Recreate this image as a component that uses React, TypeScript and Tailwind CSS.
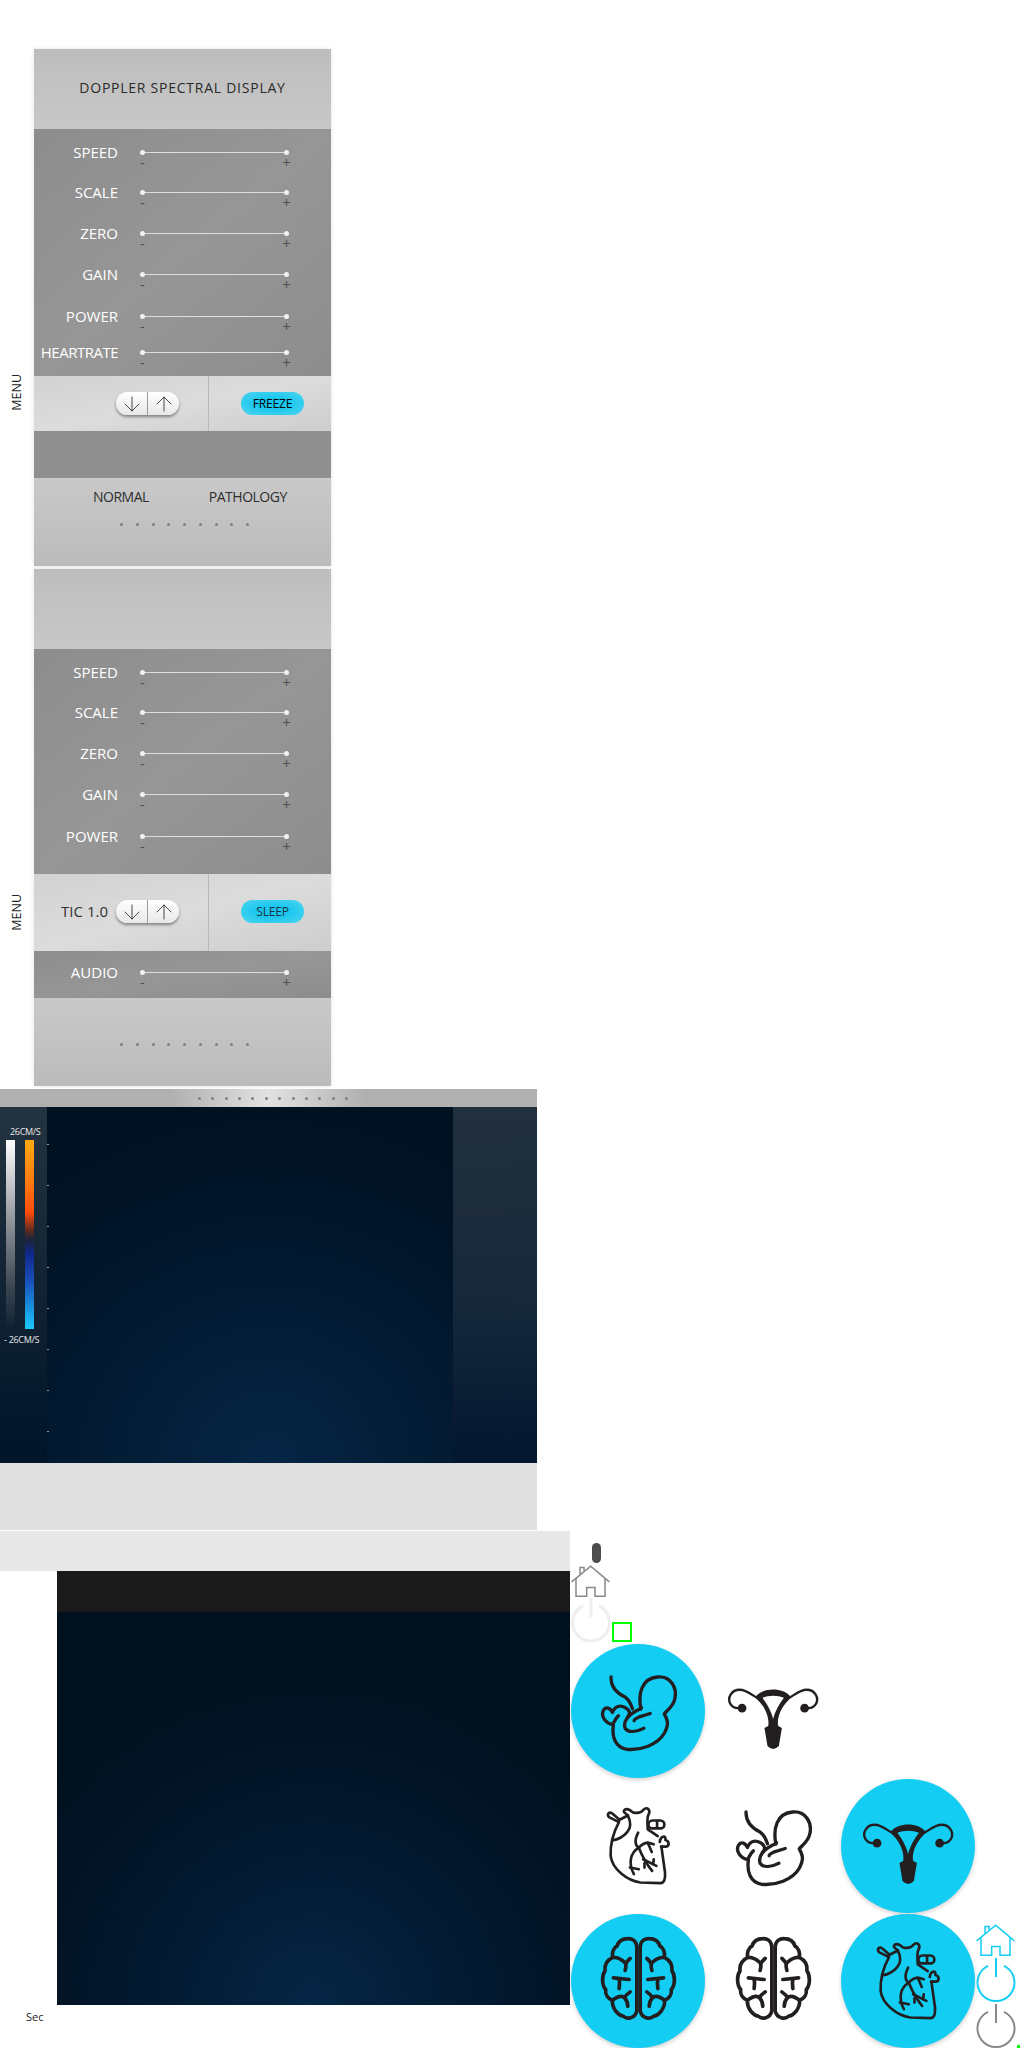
import { ArrowDown, ArrowUp } from "lucide-react";

const CYAN = "#14cdf3";

function Dots({ count, className }: { count: number; className: string }) {
  return (
    <div className={`flex justify-between ${className}`}>
      {Array.from({ length: count }).map((_, i) => (
        <span key={i} className="w-[3px] h-[3px] rounded-full bg-[#7f7f7f]" />
      ))}
    </div>
  );
}

function SliderRow({ label, className, tight }: { label: string; className?: string; tight?: boolean }) {
  return (
    <div className={`flex h-5 ${className ?? ""}`}>
      <div className={`w-[84px] text-right text-[15px] font-medium text-white leading-5 whitespace-nowrap ${tight ? "tracking-[-0.5px]" : ""}`}>
        {label}
      </div>
      <div className="ml-[22px] w-[149px] pt-2">
        <div className="relative flex h-[5px] items-center justify-between">
          <span className="w-[5px] h-[5px] rounded-full bg-[#f2f2f2]" />
          <span className="flex-1 h-px bg-[#dedede]" />
          <span className="w-[5px] h-[5px] rounded-full bg-[#f2f2f2]" />
        </div>
        <div className="flex justify-between text-[15px] leading-[14px] text-[#505050]">
          <span className="w-[5px] text-center">-</span>
          <span className="w-[5px] flex justify-center">+</span>
        </div>
      </div>
    </div>
  );
}

function Stepper() {
  return (
    <div className="flex h-[23px] w-[63px] rounded-full bg-gradient-to-b from-white to-[#e8e8e8] shadow-[0_2px_3px_rgba(0,0,0,0.4)]">
      <div className="flex flex-1 items-center justify-center border-r border-[#9a9a9a]">
        <ArrowDown size={24} strokeWidth={0.9} className="text-[#333]" />
      </div>
      <div className="flex flex-1 items-center justify-center">
        <ArrowUp size={24} strokeWidth={0.9} className="text-[#333]" />
      </div>
    </div>
  );
}

function CyanPill({ label, className }: { label: string; className: string }) {
  return (
    <div className={`flex h-[23px] w-[63px] items-center justify-center rounded-full bg-[radial-gradient(ellipse_at_center,#1cc6ee_35%,#4ed6f0_100%)] text-[12px] tracking-[-0.2px] ${className}`}>
      {label}
    </div>
  );
}

function ControlRow({ tic, action, textClass, height, inner }: { tic?: boolean; action: string; textClass: string; height: string; inner?: string }) {
  return (
    <div className={`flex bg-gradient-to-br from-[#d2d2d2] via-[#dcdcdc] to-[#cdcdcd] ${height}`}>
      <div className={`flex w-[175px] items-center justify-end gap-2 border-r border-[#b8b8b8] pr-[29px] ${inner ?? ""}`}>
        {tic && <span className="text-[15px] text-[#333]">TIC 1.0</span>}
        <Stepper />
      </div>
      <div className={`flex flex-1 items-center pl-8 ${inner ?? ""}`}>
        <CyanPill label={action} className={textClass} />
      </div>
    </div>
  );
}

const rowSpacing = ["mt-[13px]", "mt-5", "mt-[21px]", "mt-[21px]", "mt-[22px]", "mt-4"];

function Panel({ children }: { children: React.ReactNode }) {
  return (
    <div className="flex h-[517px]">
      <div className="flex w-[34px] justify-center">
        <span className="mt-[325px] h-fit rotate-180 text-[12.5px] leading-none text-[#222] [writing-mode:vertical-rl]">MENU</span>
      </div>
      <div className="flex w-[297px] flex-col shadow-[0_0_4px_rgba(0,0,0,0.12)]">{children}</div>
    </div>
  );
}

function Fetus() {
  return (
    <svg viewBox="90 100 230 230" className="h-[77px] w-[77px] overflow-visible" fill="none" stroke="#231f20" strokeWidth="10" strokeLinecap="round" strokeLinejoin="round">
      <path d="M123 112C122 140 140 160 165 172C180 182 183 195 187 207" />
      <path d="M212 208C203 160 215 116 262 112C302 108 320 145 314 175C310 200 292 210 282 222C292 240 297 252 282 280C262 315 210 332 170 328C135 322 125 290 130 255C105 250 92 228 100 212C108 198 122 205 127 218C135 198 150 195 165 203C175 208 185 220 172 232" />
      <path d="M130 250C135 240 140 232 145 228" />
      <path d="M240 221L205 232C195 236 192 240 192 243" />
      <path d="M221 265C200 275 175 280 165 265C158 245 175 225 200 212C208 208 212 208 214 204" />
    </svg>
  );
}

function Uterus() {
  return (
    <svg viewBox="475 79 272 272" className="h-[91px] w-[91px] overflow-visible">
      <g fill="none" stroke="#231f20" strokeWidth="7" strokeLinecap="round">
        <path d="M568 178C545 165 530 150 510 150C485 150 472 175 482 192C487 202 495 205 505 205" />
        <path d="M652 178C675 165 690 150 710 150C735 150 748 175 738 192C733 202 725 205 715 205" />
      </g>
      <circle cx="517" cy="205" r="13" fill="#231f20" />
      <circle cx="704" cy="205" r="13" fill="#231f20" />
      <path
        fillRule="evenodd"
        fill="#231f20"
        d="M558 170C580 142 640 142 662 170L655 182C635 200 620 235 625 258L636 264L627 318Q610 336 593 318L584 264L595 258C600 235 585 200 565 182ZM578 174C595 166 625 166 642 174C630 190 615 215 610 238C605 215 590 190 578 174Z"
      />
    </svg>
  );
}

function Heart() {
  return (
    <svg viewBox="100 500 205 240" className="h-[80px] w-[68px] overflow-visible" fill="none" stroke="#231f20" strokeWidth="8" strokeLinecap="round" strokeLinejoin="round">
      <path d="M145 548C128 580 118 610 120 650C125 690 170 725 210 730L270 732C282 732 285 720 284 700L273 622" />
      <path d="M145 548L115 533C108 525 115 515 125 522L147 541L172 528C165 520 155 518 162 511C170 505 180 512 186 518C198 522 212 520 220 510C230 500 242 512 234 526C229 534 230 545 232 570L262 590" />
      <path d="M172 528C180 545 182 565 170 578C160 590 145 600 125 603" />
      <rect x="234" y="543" width="48" height="24" rx="12" />
      <path d="M260 545V565" />
      <path d="M268 608C270 590 288 585 285 602C298 605 298 622 285 622L272 622" />
      <path d="M203 580C190 605 195 620 205 625C225 605 235 610 250 615" />
      <path d="M205 625C180 640 172 670 190 705" />
      <path d="M205 625C215 650 225 670 245 695" />
      <path d="M232 610L244 638" />
      <path d="M218 660L258 680" />
      <path d="M222 672L222 685" />
      <path d="M178 685L205 690" />
      <path d="M250 660L248 675" />
    </svg>
  );
}

function Brain() {
  const half = (
    <>
      <path d="M605 200C603 182 590 175 578 176C562 176 550 185 546 198C535 203 530 218 533 232C517 240 508 255 510 272C500 285 500 315 512 328C510 342 518 355 532 360C530 385 550 405 565 408C575 418 600 415 605 392Z" />
      <path d="M536 232C550 232 562 240 572 250C575 245 580 240 585 235" />
      <path d="M572 250C573 258 572 265 570 271" />
      <path d="M535 293L582 298" />
      <path d="M552 296C555 310 553 318 552 325" />
      <path d="M532 360C545 350 560 345 568 352C575 360 578 370 578 378" />
      <path d="M568 352C572 345 578 340 585 335" />
    </>
  );
  return (
    <svg viewBox="495 174 230 260" className="h-[87px] w-[77px] overflow-visible" fill="none" stroke="#231f20" strokeWidth="11" strokeLinecap="round" strokeLinejoin="round">
      <g>{half}</g>
      <g transform="translate(1220 0) scale(-1 1)">{half}</g>
    </svg>
  );
}

function House({ color }: { color: string }) {
  return (
    <svg viewBox="33 105 117 95" className="h-8 w-[39px] overflow-visible" fill="none" stroke={color} strokeWidth="4.5">
      <path d="M35 155L92 108L148 155" />
      <path d="M60 134V112H72V122" />
      <path d="M48 145V198H80V172H105V198H135V145" />
    </svg>
  );
}

function Power({ color, width = 2 }: { color: string; width?: number }) {
  return (
    <svg viewBox="0 0 40 44" className="h-11 w-10 overflow-visible" fill="none" stroke={color} strokeWidth={width}>
      <path d="M12 7.8A18.5 18.5 0 1 0 28 7.8" />
      <path d="M20 0V19" />
    </svg>
  );
}

function Cell({ active, children }: { active?: boolean; children?: React.ReactNode }) {
  return (
    <div className={`flex h-[134px] w-[134px] items-center justify-center rounded-full ${active ? "bg-[#14cdf3] shadow-[0_2px_4px_rgba(0,0,0,0.18)]" : ""}`}>
      {children}
    </div>
  );
}

export default function App() {
  return (
    <div className="relative h-[2048px] w-[1024px] overflow-hidden bg-white font-['Open_Sans',sans-serif]">
      <div className="flex flex-col gap-[3px] pt-[49px]">
        <Panel>
          <div className="flex h-20 items-center justify-center bg-gradient-to-b from-[#bdbdbd] to-[#c8c8c8] pb-[3px] text-[14px] tracking-[0.75px] text-[#2a2a2a]">
            DOPPLER SPECTRAL DISPLAY
          </div>
          <div className="h-[247px] bg-gradient-to-br from-[#8d8d8d] via-[#969696] to-[#8d8d8d]">
            {["SPEED", "SCALE", "ZERO", "GAIN", "POWER", "HEARTRATE"].map((label, i) => (
              <SliderRow key={label} label={label} className={rowSpacing[i]} tight={label === "HEARTRATE"} />
            ))}
          </div>
          <ControlRow action="FREEZE" textClass="text-black" height="h-[55px]" />
          <div className="h-[47px] bg-[#8f8f8f]" />
          <div className="flex h-[88px] flex-col bg-gradient-to-b from-[#c9c9c9] to-[#bbbbbb]">
            <div className="flex h-[37px] items-center text-[14px] tracking-[-0.5px] text-[#2e2e2e]">
              <span className="ml-[59px]">NORMAL</span>
              <span className="ml-[60px]">PATHOLOGY</span>
            </div>
            <Dots count={9} className="ml-[86px] mt-2 w-[129px]" />
          </div>
        </Panel>
        <Panel>
          <div className="h-20 bg-gradient-to-b from-[#bdbdbd] to-[#c8c8c8]" />
          <div className="h-[225px] bg-gradient-to-br from-[#8d8d8d] via-[#969696] to-[#8d8d8d]">
            {["SPEED", "SCALE", "ZERO", "GAIN", "POWER"].map((label, i) => (
              <SliderRow key={label} label={label} className={rowSpacing[i]} />
            ))}
          </div>
          <ControlRow tic action="SLEEP" textClass="text-[#1c3441]" height="h-[77px]" inner="pb-0.5" />
          <div className="h-[47px] bg-gradient-to-br from-[#8d8d8d] via-[#969696] to-[#8d8d8d] pt-[11px]">
            <SliderRow label="AUDIO" />
          </div>
          <div className="h-[88px] bg-gradient-to-b from-[#c9c9c9] to-[#bbbbbb] pt-[45px]">
            <Dots count={9} className="ml-[86px] w-[129px]" />
          </div>
        </Panel>
      </div>

      <div className="mt-[3px] w-[537px]">
        <div className="flex h-[18px] items-center bg-[linear-gradient(90deg,#b0b0b0_32%,#e2e2e2_50%,#b0b0b0_68%)] pl-[198px]">
          <Dots count={12} className="w-[150px]" />
        </div>
        <div className="flex h-[356px] bg-[radial-gradient(ellipse_70%_100%_at_50%_100%,#052545_0%,#011325_85%,#001122_100%)]">
          <div className="w-[47px] bg-gradient-to-b from-[#243340] to-[#021428] pt-[19px] text-[9px] leading-3 text-[#e8e8e8]">
            <div className="pl-[10px] tracking-[-0.3px]">26CM/S</div>
            <div className="ml-[6px] mt-[2px] flex h-[189px] gap-[10px]">
              <div className="w-[9px] bg-[linear-gradient(180deg,#ffffff_0%,#8a8f95_45%,#3a4550_78%,transparent_100%)]" />
              <div className="w-[9px] bg-[linear-gradient(180deg,#fdaa12_0%,#ff7a10_22%,#ff4d0c_38%,#5a2a20_48%,#1a2440_53%,#10288a_60%,#1a50bc_75%,#1ac8fc_100%)]" />
            </div>
            <div className="mt-[5px] pl-[4px] tracking-[-0.3px]">- 26CM/S</div>
          </div>
          <div className="flex w-[2px] flex-col gap-10 pt-[37px]">
            {Array.from({ length: 8 }).map((_, i) => (
              <span key={i} className="h-px w-[2px] bg-[#8c98a2]" />
            ))}
          </div>
          <div className="flex-1" />
          <div className="w-[84px] bg-[linear-gradient(180deg,#22303d_0%,#16283a_55%,#031630_100%)]" />
        </div>
        <div className="h-[67px] bg-[#e0e0e0]" />
      </div>

      <div className="mt-px flex h-[517px]">
        <div className="flex w-[570px] flex-col">
          <div className="h-10 bg-[#e7e7e7]" />
          <div className="ml-[57px] flex flex-col">
            <div className="h-[41px] bg-[#1a1a1a]" />
            <div className="h-[393px] bg-[radial-gradient(ellipse_70%_90%_at_50%_100%,#052545_0%,#021426_70%,#01101e_100%)]" />
          </div>
          <div className="ml-[26px] mt-[5px] text-[11px] leading-[14px] text-[#222]">Sec</div>
        </div>
        <div className="flex flex-col pt-3">
          <div className="ml-[22px] h-5 w-[9px] rounded-full bg-[#4d4d4d]" />
          <div className="ml-px mt-0.5">
            <House color="#888888" />
          </div>
          <div className="ml-px mt-px flex items-end">
            <Power color="#eeeeee" width={3} />
            <div className="ml-px h-5 w-5 border-2 border-[#00ff00]" />
          </div>
          <div className="ml-px mt-[2px] flex">
            <div className="grid grid-cols-[135px_135px_135px] grid-rows-[135px_135px_134px]">
              <Cell active>
                <Fetus />
              </Cell>
              <Cell>
                <Uterus />
              </Cell>
              <Cell />
              <Cell>
                <Heart />
              </Cell>
              <Cell>
                <Fetus />
              </Cell>
              <Cell active>
                <Uterus />
              </Cell>
              <Cell active>
                <Brain />
              </Cell>
              <Cell>
                <Brain />
              </Cell>
              <Cell active>
                <Heart />
              </Cell>
            </div>
            <div className="flex flex-col justify-end gap-0.5">
              <House color={CYAN} />
              <Power color={CYAN} />
              <Power color="#888888" />
            </div>
          </div>
        </div>
      </div>
      <div className="absolute left-[1017px] top-[2045px] h-[3px] w-[3px] bg-[#00ff00]" />
    </div>
  );
}
